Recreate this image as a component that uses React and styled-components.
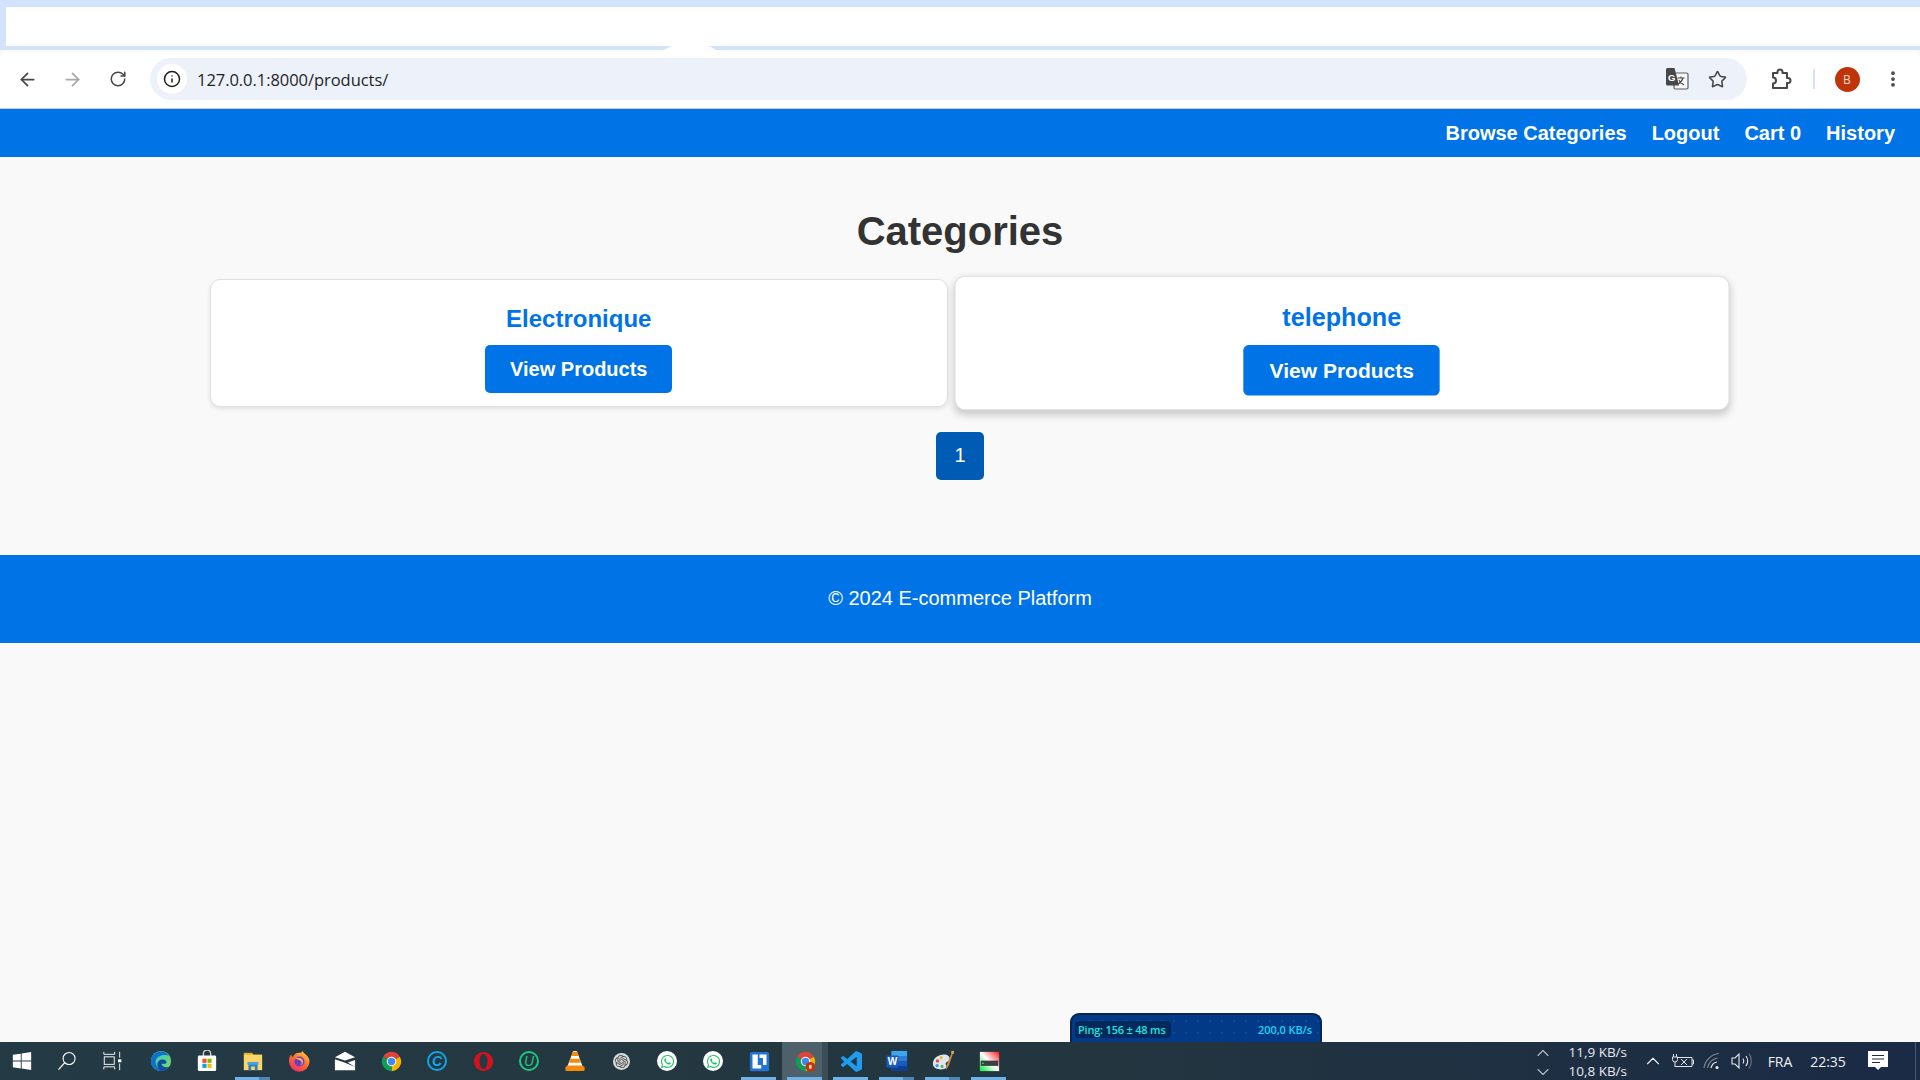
import React from "react";
import styled, { createGlobalStyle } from "styled-components";
import { ArrowLeft, ArrowRight, RotateCw, Info, Star, EllipsisVertical, ChevronUp, ChevronDown } from "lucide-react";
import { FaWhatsapp } from "react-icons/fa";
import { SiOpenai } from "react-icons/si";

const Global = createGlobalStyle`
  html, body { margin: 0; padding: 0; background: #f9f9f9; }
  #root { height: 1080px; }
  * { box-sizing: border-box; }
`;

const Screen = styled.div`
  height: 1080px;
  width: 1920px;
  overflow: hidden;
  display: flex;
  flex-direction: column;
  background: #f9f9f9;
  font-family: "Liberation Sans", Arial, sans-serif;
`;

/* ---------- browser chrome ---------- */
const TabStrip = styled.div`
  height: 50px;
  flex: none;
  background: #d3e3fd;
  padding: 7px 0 4px 6px;
  position: relative;
  &::after {
    content: "";
    position: absolute;
    left: 664px;
    width: 52px;
    top: 46px;
    height: 4px;
    background: #fff;
    clip-path: polygon(0 100%, 14% 0, 86% 0, 100% 100%);
  }
`;
const TabFill = styled.div`
  height: 100%;
  background: #fff;
`;
const Toolbar = styled.div`
  height: 59px;
  flex: none;
  background: #fff;
  border-top-left-radius: 9px;
  border-top-right-radius: 9px;
  border-bottom: 1px solid #c9ced6;
  display: flex;
  align-items: center;
  color: #474747;
`;
const NavButton = styled.span`
  width: ${(p) => p.$w || 45}px;
  display: flex;
  justify-content: center;
  align-items: center;
  color: ${(p) => (p.$off ? "#a8a8a8" : "#474747")};
`;
const NavButtons = styled.div`
  display: flex;
  align-items: center;
  padding-left: 5px;
  width: 150px;
`;
const Omnibox = styled.div`
  width: 1597px;
  height: 42px;
  border-radius: 21px;
  background: #ecf1fa;
  display: flex;
  align-items: center;
  padding: 0 7px;
`;
const SiteChip = styled.span`
  width: 30px;
  height: 30px;
  border-radius: 50%;
  background: #fff;
  display: flex;
  align-items: center;
  justify-content: center;
  color: #1f1f1f;
  flex: none;
`;
const Url = styled.span`
  margin-left: 10px;
  flex: 1;
  font-family: "Open Sans", "Noto Sans", sans-serif;
  font-size: 16.5px;
  letter-spacing: -0.05px;
  color: #1f1f1f;
  white-space: nowrap;
`;
const OmniIcons = styled.div`
  display: flex;
  align-items: center;
  gap: 19px;
  padding-right: 13px;
`;
const RightTools = styled.div`
  flex: 1;
  display: flex;
  align-items: center;
  padding-left: 21px;
`;
const Separator = styled.span`
  width: 1.5px;
  height: 20px;
  background: #d3e3fd;
  margin: 0 20px 0 21px;
`;
const Avatar = styled.span`
  width: 25px;
  height: 25px;
  border-radius: 50%;
  background: #bf3409;
  color: #f7d9cf;
  font-size: 12px;
  font-family: "Open Sans", sans-serif;
  display: flex;
  align-items: center;
  justify-content: center;
  flex: none;
`;
const Dots = styled.span`
  display: flex;
  margin-left: 23px;
  color: #474747;
`;

/* ---------- site ---------- */
const SiteNav = styled.nav`
  height: 48px;
  flex: none;
  background: #0073e6;
  display: flex;
  justify-content: flex-end;
  align-items: center;
  gap: 25px;
  padding: 0 25px 0 0;
`;
const NavLink = styled.a`
  color: #fff;
  font-weight: 700;
  font-size: 20px;
  text-decoration: none;
`;
const Main = styled.main`
  flex: none;
  padding: 51px 0 75px;
  display: flex;
  flex-direction: column;
  align-items: center;
`;
const Title = styled.h2`
  margin: 0 0 25px;
  font-size: 40px;
  line-height: 46px;
  font-weight: 700;
  color: #333;
  text-align: center;
`;
const CardGrid = styled.div`
  width: 1500px;
  display: grid;
  grid-template-columns: 1fr 1fr;
  gap: 25px;
`;
const Card = styled.article`
  background: #fff;
  border: 1px solid #e0e0e0;
  border-radius: 10px;
  padding: 25px 12px 13px;
  text-align: center;
  box-shadow: ${(p) => (p.$hover ? "0 4px 8px rgba(0,0,0,0.2)" : "0 2px 4px rgba(0,0,0,0.1)")};
  transform: ${(p) => (p.$hover ? "scale(1.05)" : "none")};
`;
const CardName = styled.h3`
  margin: 0 0 12px;
  font-size: 24px;
  line-height: 28px;
  font-weight: 700;
  color: #0073e6;
`;
const ViewButton = styled.a`
  display: block;
  width: fit-content;
  margin: 0 auto;
  background: #0073e6;
  color: #fff;
  font-weight: 700;
  font-size: 20px;
  line-height: 24px;
  padding: 12px 25px;
  border-radius: 5px;
  text-decoration: none;
`;
const Pagination = styled.div`
  display: flex;
  justify-content: center;
  margin-top: 25px;
`;
const PageButton = styled.span`
  width: 48px;
  height: 48px;
  background: #005bb5;
  color: #fff;
  border-radius: 5px;
  font-size: 20px;
  display: flex;
  align-items: center;
  justify-content: center;
  padding-bottom: 2px;
`;
const Footer = styled.footer`
  height: 88px;
  flex: none;
  background: #0073e6;
  color: #fff;
  font-size: 20px;
  display: flex;
  align-items: center;
  justify-content: center;
  padding-bottom: 2px;
`;
const Spacer = styled.div`
  flex: 1;
`;

/* ---------- taskbar ---------- */
const Taskbar = styled.div`
  height: 38px;
  flex: none;
  position: relative;
  background: linear-gradient(90deg, #243a44 0%, #23363f 55%, #1b2a45 100%);
  display: flex;
  align-items: center;
  color: #fff;
`;
const Slot = styled.span`
  width: ${(p) => p.$w || 46}px;
  height: 38px;
  flex: none;
  margin-right: ${(p) => p.$mr || 0}px;
  display: flex;
  align-items: center;
  justify-content: center;
  position: relative;
  background: ${(p) => (p.$active ? "linear-gradient(90deg, #4e6069 0 40px, #3c4d57 40px)" : "transparent")};
  &::after {
    content: ${(p) => (p.$open ? '""' : "none")};
    position: absolute;
    bottom: 0;
    left: 5px;
    width: 35px;
    height: 3px;
    background: ${(p) => (p.$split ? "linear-gradient(90deg, #6db2e8 0 24px, #4d86b5 24px)" : "#6db2e8")};
  }
`;
const Tray = styled.div`
  margin-left: auto;
  height: 38px;
  display: flex;
  align-items: center;
  font-family: "Open Sans", "Noto Sans", sans-serif;
  color: #eef0f4;
`;
const Speed = styled.div`
  width: 102px;
  height: 38px;
  padding-right: 8px;
  display: grid;
  grid-template-columns: 20px 1fr;
  grid-template-rows: 19px 19px;
  align-items: center;
  font-size: 13.5px;
  text-align: right;
  line-height: 19px;
  white-space: nowrap;
  color: #e6e9ee;
  padding-top: 1px;
`;
const SpeedArrow = styled.span`
  display: flex;
  color: #b4bcc8;
`;
const TrayItem = styled.span`
  display: flex;
  justify-content: center;
  align-items: center;
  width: ${(p) => p.$w}px;
  font-size: 14px;
  flex: none;
`;
const DesktopEdge = styled.span`
  width: 1px;
  height: 38px;
  margin: 0 4px 0 8px;
  background: #4a5870;
`;
const PingWidget = styled.div`
  position: absolute;
  left: 1070px;
  bottom: 38px;
  width: 252px;
  height: 29px;
  background-color: #023a88;
  background-image: radial-gradient(rgba(90, 140, 210, 0.35) 0.6px, transparent 0.8px);
  background-size: 12px 12px;
  border-radius: 9px 9px 0 0;
  border: 2px solid #08264f;
  border-bottom: 0;
  display: flex;
  align-items: center;
  justify-content: space-between;
  padding: 2px 8px 0 3px;
  font-family: "Open Sans", "Noto Sans", sans-serif;
  font-size: 11px;
  font-weight: 600;
  color: #20e4dc;
`;
const PingValue = styled.span`
  background: #04295c;
  border-radius: 4px;
  padding: 1px 5px 1px 3px;
  letter-spacing: -0.2px;
`;
const RateValue = styled.span`
  color: #1cd4f0;
  font-size: 11px;
  letter-spacing: -0.1px;
`;

/* ---------- drawn icons ---------- */
const Svg = ({ s = 20, children, vb = "0 0 24 24" }) => (
  <svg width={s} height={s} viewBox={vb} fill="none">{children}</svg>
);
const Translate = () => (
  <svg width="24" height="24" viewBox="0 0 24 24" fill="none">
    <rect x="9" y="6" width="14" height="16" rx="1.5" fill="#f4f5f7" stroke="#5b5e63" strokeWidth="1.2" />
    <path d="M12.5 11h7M16 9.5V11M18 11c-.7 2.600-2.400 4.700-5 6M14 13c.9 2 2.600 3.700 5 5" stroke="#474747" strokeWidth="1.1" />
    <path d="M1 2.500A1.500 1.500 0 0 1 2.500 1h7l4.500 17.500H2.500A1.500 1.500 0 0 1 1 17z" fill="#474747" />
    <text x="3" y="13.5" fontSize="9.5" fontWeight="700" fill="#fff" fontFamily="Liberation Sans">G</text>
  </svg>
);
const PuzzleGlyph = () => (
  <Svg s={24}>
    <path d="M5 6h4.500V5a2.500 2.500 0 0 1 5 0v1H19v5h1a2.500 2.500 0 0 1 0 5h-1v5H5v-4.500a3 3 0 0 0 0-6z" stroke="#474747" strokeWidth="2" strokeLinejoin="round" />
  </Svg>
);
const WindowsLogo = () => (
  <Svg>
    <path d="M1 4.600 10.500 3.200v8.300H1zM11.600 3 23 1.300v10.200H11.600zM1 12.600h9.500v8.300L1 19.500zM11.600 12.600H23v10.200l-11.400-1.700z" fill="#fff" />
  </Svg>
);
const SearchGlyph = () => (
  <Svg>
    <circle cx="14.5" cy="9" r="7.2" stroke="#fff" strokeWidth="1.3" />
    <path d="M9.300 14 1.800 22.300" stroke="#fff" strokeWidth="1.5" />
  </Svg>
);
const TaskView = () => (
  <Svg>
    <path d="M1 1v3h13V1M1 22v-3h13v3M20 1v7M20 15v8" stroke="#fff" strokeWidth="1.1" />
    <rect x="1.5" y="7" width="12" height="9" stroke="#fff" strokeWidth="1.1" />
    <rect x="18" y="10" width="4" height="3.5" fill="#fff" />
  </Svg>
);
const EdgeLogo = () => (
  <Svg s={22}>
    <defs>
      <linearGradient id="edgeA" x1="0" y1="0" x2="1" y2="1">
        <stop offset="0" stopColor="#2fc5d8" /><stop offset="1" stopColor="#7ed957" />
      </linearGradient>
    </defs>
    <circle cx="12" cy="12" r="11" fill="url(#edgeA)" />
    <path d="M1 12C1 6 6 1.600 12 1.600c4 0 7 2 8.600 5C17 4.600 9 5 6.500 11c-1.500 4 1.500 10 7.500 11.800C7 24 1 19 1 12z" fill="#0f71c9" />
    <path d="M8 16c0-5 6-7 9-4.500 1.500 1.200 1.500 3-.5 3.500H12.600c0 3 5.400 5 9 3-2 3-5 4.800-8 4.800-3 0-5.600-3.300-5.600-6.800z" fill="#0b4f9e" />
  </Svg>
);
const StoreLogo = () => (
  <Svg s={22}>
    <path d="M8 7V4a4 4 0 0 1 8 0v3" stroke="#c9ccd0" strokeWidth="1.6" />
    <rect x="2" y="6" width="20" height="17" rx="1.500" fill="#fff" />
    <rect x="7" y="9.500" width="4.500" height="4.500" fill="#f25022" />
    <rect x="12.500" y="9.500" width="4.500" height="4.500" fill="#7fba00" />
    <rect x="7" y="15" width="4.500" height="4.500" fill="#00a4ef" />
    <rect x="12.500" y="15" width="4.500" height="4.500" fill="#ffb900" />
  </Svg>
);
const FolderLogo = () => (
  <Svg s={22}>
    <path d="M2 3h9l2 3H2z" fill="#e8a920" />
    <path d="M2 5h20v17H2z" fill="#fbd567" />
    <path d="M7 22v-7h10v7h-3v-4h-4v4z" fill="#2f7fc4" />
    <rect x="6" y="13" width="12" height="3" fill="#4aa3e0" />
  </Svg>
);
const FirefoxLogo = () => (
  <Svg s={22}>
    <defs>
      <linearGradient id="foxA" x1="0.800" y1="0" x2="0.200" y2="1">
        <stop offset="0" stopColor="#ffcf3d" /><stop offset="0.500" stopColor="#ff6b2c" /><stop offset="1" stopColor="#e62b6a" />
      </linearGradient>
    </defs>
    <path d="M16 .5c.500 2 1.500 3 3 4 3 2.500 4.500 5 4.500 8a11.200 11.200 0 0 1-22.400 0c0-3 .4-6 2.400-8 0 1.500 1 3 2 3 1-3 4-5 7-4.500 1.500 0 3.500-.500 3.500-2.500z" fill="url(#foxA)" />
    <circle cx="12.500" cy="12.500" r="5.500" fill="#6a3bc8" />
    <path d="M8 9.500c3-2 8-1 8.500 3 .3 3-2.500 4.500-4.500 4 2 0 3-1.200 3-2.800C15 12 12.500 10.500 8 9.500z" fill="#ffb63c" />
  </Svg>
);
const MailLogo = () => (
  <Svg s={22}>
    <path d="M1 8 12 2l11 6-11 3.500z" fill="#fff" />
    <path d="M1 10v12h22V11l-8 2.500 8 5-11-4.500z" fill="#fff" />
  </Svg>
);
const ChromeLogo = ({ badge, s = 21 }) => (
  <svg width={s} height={s} viewBox="0 0 24 24">
    <path d="M12 12 2.470 6.500A11 11 0 0 1 21.530 6.500z" fill="#db4437" />
    <path d="M12 12 21.530 6.500A11 11 0 0 1 12 23z" fill="#f4b400" />
    <path d="M12 12 12 23A11 11 0 0 1 2.470 6.500z" fill="#0f9d58" />
    <circle cx="12" cy="12" r="5.400" fill="#fff" />
    <circle cx="12" cy="12" r="4.200" fill="#4285f4" />
    {badge && <circle cx="17.500" cy="18" r="5.500" fill="#bf3409" />}
    {badge && <rect x="16" y="15.800" width="3" height="4.400" fill="#f4cdbf" />}
  </svg>
);
const RingLetter = styled.span`
  width: 20px;
  height: 20px;
  border-radius: 50%;
  border: 2px solid ${(p) => p.$c};
  color: ${(p) => p.$c};
  display: flex;
  align-items: center;
  justify-content: center;
  font-family: "Liberation Sans", sans-serif;
  font-style: italic;
  font-weight: ${(p) => p.$fw || 400};
  font-size: 14px;
  line-height: 1;
`;
const OperaLogo = () => (
  <Svg s={21}>
    <circle cx="12" cy="12" r="11" fill="#d3121e" />
    <ellipse cx="12" cy="12" rx="4.600" ry="8.500" fill="#243a44" />
  </Svg>
);
const VlcLogo = () => (
  <Svg s={22}>
    <path d="M10 1h4l7 19H3z" fill="#fff" />
    <path d="M9.500 2h5l1.500 4.500H8zM7 9.500h10l1.500 4.500h-13z" fill="#f58a0b" />
    <path d="M1.500 18.500 4 17l16 0 2.500 1.500 0 3.500-1 1h-19l-1-1z" fill="#f58a0b" />
  </Svg>
);
const Disc = styled.span`
  width: ${(p) => p.$s}px;
  height: ${(p) => p.$s}px;
  border-radius: 50%;
  background: ${(p) => p.$bg};
  color: ${(p) => p.$c};
  display: flex;
  align-items: center;
  justify-content: center;
`;
const BoxL = () => (
  <Svg s={21}>
    <rect x="1" y="1" width="22" height="22" rx="2" fill="#2174d4" />
    <path d="M4 4h6v12h4v4H4z" fill="#fff" />
    <path d="M12 4h8v12h-4V8h-4z" fill="#fff" />
  </Svg>
);
const VsCode = () => (
  <Svg s={21}>
    <path d="M23.150 2.587 18.210.210a1.494 1.494 0 0 0-1.705.29l-9.460 8.630-4.120-3.128a.999.999 0 0 0-1.276.057L.327 7.261A1 1 0 0 0 .326 8.740L3.899 12 .326 15.260a1 1 0 0 0 .001 1.479L1.650 17.940a.999.999 0 0 0 1.276.057l4.120-3.128 9.460 8.630a1.492 1.492 0 0 0 1.704.29l4.942-2.377A1.500 1.500 0 0 0 24 20.060V3.939a1.500 1.500 0 0 0-.850-1.352zm-5.146 14.861L10.826 12l7.178-5.448v10.896z" fill="#1f9cf0" />
  </Svg>
);
const WordLogo = () => (
  <Svg s={22}>
    <rect x="6" y="1" width="17" height="22" rx="1" fill="#2b7cd3" />
    <rect x="6" y="1" width="17" height="5.500" fill="#41a5ee" />
    <rect x="6" y="12" width="17" height="5.500" fill="#185abd" />
    <rect x="6" y="17.500" width="17" height="5.500" fill="#103f91" />
    <rect x="0.500" y="6" width="13" height="13" rx="1" fill="#185abd" />
    <text x="1.800" y="16.500" fontSize="11" fontWeight="700" fill="#fff" fontFamily="Liberation Sans">W</text>
  </Svg>
);
const PaintLogo = () => (
  <Svg s={22}>
    <path d="M1 15c0-6 6-10 12-10 5 0 7 3 6 6-1 2-4 2-4 4 0 2 2 3 0 5-3 2-14 2-14-5z" fill="#dfe6ee" />
    <circle cx="6" cy="12" r="1.800" fill="#e5483b" />
    <circle cx="10" cy="8.500" r="1.600" fill="#f4b400" />
    <circle cx="5.500" cy="17" r="1.800" fill="#2f9ee0" />
    <circle cx="11" cy="18" r="1.600" fill="#4caf50" />
    <path d="M22.500 1 16 16l-1 6 3.500-5L23.500 2z" fill="#c98a3c" />
    <path d="M21 1h3v3h-3z" fill="#e0a54e" />
  </Svg>
);
const DriveLogo = () => (
  <Svg s={21}>
    <defs>
      <linearGradient id="drvA" x1="0" y1="1" x2="1" y2="0">
        <stop offset="0" stopColor="#00f03c" /><stop offset="0.500" stopColor="#ffffff" /><stop offset="1" stopColor="#ff1a1a" />
      </linearGradient>
    </defs>
    <rect x="1" y="1" width="22" height="22" fill="url(#drvA)" />
    <rect x="2" y="11" width="20" height="6" fill="#3b3f42" />
    <rect x="3.500" y="13.500" width="2" height="1.200" fill="#3df06a" />
  </Svg>
);
const Battery = () => (
  <svg width="22" height="16" viewBox="0 0 22 16" fill="none" stroke="#dfe3ea" strokeWidth="1">
    <path d="M1.500 1v3M4.500 1v3M.5 4h5v2.500a2.500 2.500 0 0 1-5 0zM3 9v5" />
    <path d="M6 4.500h14v9H3" />
    <path d="M20 7h1.500v4H20M9 6l6 6M15 6l-6 6" />
  </svg>
);
const Wifi = () => (
  <svg width="20" height="18" viewBox="0 0 20 18" fill="none" stroke="#7b8494" strokeWidth="1.200">
    <path d="M1 16C2 8 9 2 16 1.500" />
    <path d="M4.500 16c1-5 5-9 10-10" />
    <path d="M8 16c.7-3 3-5.500 6-6" stroke="#e6e9ee" />
    <circle cx="14" cy="15.500" r="1.500" fill="#eef0f4" stroke="none" />
  </svg>
);
const Speaker = () => (
  <svg width="22" height="18" viewBox="0 0 22 18" fill="none" stroke="#e6e9ee" strokeWidth="1.100">
    <path d="M1 6h3l4-4v14l-4-4H1z" />
    <path d="M12 6.500c1 1.500 1 3.500 0 5" />
    <path d="M15 4c2 3 2 7 0 10" />
    <path d="M18 1.500c3 4 3 11 0 15" stroke="#6f7889" />
  </svg>
);
const Notification = () => (
  <svg width="22" height="22" viewBox="0 0 22 22">
    <path d="M1 1h20v16h-7l-3 3-3-3H1z" fill="#fff" />
    <path d="M5 5.500h12M5 9h12M5 12.500h8" stroke="#1b2a45" strokeWidth="1" />
  </svg>
);

const CATEGORIES = [
  { name: "Electronique", hover: false },
  { name: "telephone", hover: true },
];

export default function App() {
  return (
    <Screen>
      <Global />
      <TabStrip><TabFill /></TabStrip>
      <Toolbar>
        <NavButtons>
          <NavButton><ArrowLeft size={21} strokeWidth={2} /></NavButton>
          <NavButton $off><ArrowRight size={21} strokeWidth={2} /></NavButton>
          <NavButton><RotateCw size={18} strokeWidth={2} /></NavButton>
        </NavButtons>
        <Omnibox>
          <SiteChip><Info size={18} strokeWidth={2} /></SiteChip>
          <Url>127.0.0.1:8000/products/</Url>
          <OmniIcons>
            <Translate />
            <Star size={19} strokeWidth={2} color="#474747" />
          </OmniIcons>
        </Omnibox>
        <RightTools>
          <PuzzleGlyph />
          <Separator />
          <Avatar>B</Avatar>
          <Dots><EllipsisVertical size={20} strokeWidth={2.500} /></Dots>
        </RightTools>
      </Toolbar>
      <SiteNav>
        <NavLink>Browse Categories</NavLink>
        <NavLink>Logout</NavLink>
        <NavLink>Cart 0</NavLink>
        <NavLink>History</NavLink>
      </SiteNav>
      <Main>
        <Title>Categories</Title>
        <CardGrid>
          {CATEGORIES.map((c) => (
            <Card key={c.name} $hover={c.hover}>
              <CardName>{c.name}</CardName>
              <ViewButton>View Products</ViewButton>
            </Card>
          ))}
        </CardGrid>
        <Pagination><PageButton>1</PageButton></Pagination>
      </Main>
      <Footer>© 2024 E-commerce Platform</Footer>
      <Spacer />
      <Taskbar>
        <PingWidget>
          <PingValue>Ping: 156 ± 48 ms</PingValue>
          <RateValue>200,0 KB/s</RateValue>
        </PingWidget>
        <Slot $w={44}><WindowsLogo /></Slot>
        <Slot><SearchGlyph /></Slot>
        <Slot $mr={2}><TaskView /></Slot>
        <Slot><EdgeLogo /></Slot>
        <Slot><StoreLogo /></Slot>
        <Slot $open $split><FolderLogo /></Slot>
        <Slot><FirefoxLogo /></Slot>
        <Slot><MailLogo /></Slot>
        <Slot><ChromeLogo /></Slot>
        <Slot><RingLetter $c="#12a5ea" $fw={700}>C</RingLetter></Slot>
        <Slot><OperaLogo /></Slot>
        <Slot><RingLetter $c="#1fc77e">U</RingLetter></Slot>
        <Slot><VlcLogo /></Slot>
        <Slot><Disc $s={17} $bg="#d8d8d8" $c="#4a4a4a"><SiOpenai size={13} /></Disc></Slot>
        <Slot><Disc $s={20} $bg="#fff" $c="#25c263"><FaWhatsapp size={15} /></Disc></Slot>
        <Slot><Disc $s={20} $bg="#fff" $c="#25c263"><FaWhatsapp size={15} /></Disc></Slot>
        <Slot $open><BoxL /></Slot>
        <Slot $open $active><ChromeLogo badge /></Slot>
        <Slot $open><VsCode /></Slot>
        <Slot $open $split><WordLogo /></Slot>
        <Slot $open $split><PaintLogo /></Slot>
        <Slot $open><DriveLogo /></Slot>
        <Tray>
          <Speed>
            <SpeedArrow><ChevronUp size={20} strokeWidth={1.300} /></SpeedArrow>
            <span>11,9 KB/s</span>
            <SpeedArrow><ChevronDown size={20} strokeWidth={1.300} /></SpeedArrow>
            <span>10,8 KB/s</span>
          </Speed>
          <TrayItem $w={36}><ChevronUp size={22} strokeWidth={1.200} /></TrayItem>
          <TrayItem $w={24}><Battery /></TrayItem>
          <TrayItem $w={36}><Wifi /></TrayItem>
          <TrayItem $w={22}><Speaker /></TrayItem>
          <TrayItem $w={54}>FRA</TrayItem>
          <TrayItem $w={42}>22:35</TrayItem>
          <TrayItem $w={58}><Notification /></TrayItem>
          <DesktopEdge />
        </Tray>
      </Taskbar>
    </Screen>
  );
}
